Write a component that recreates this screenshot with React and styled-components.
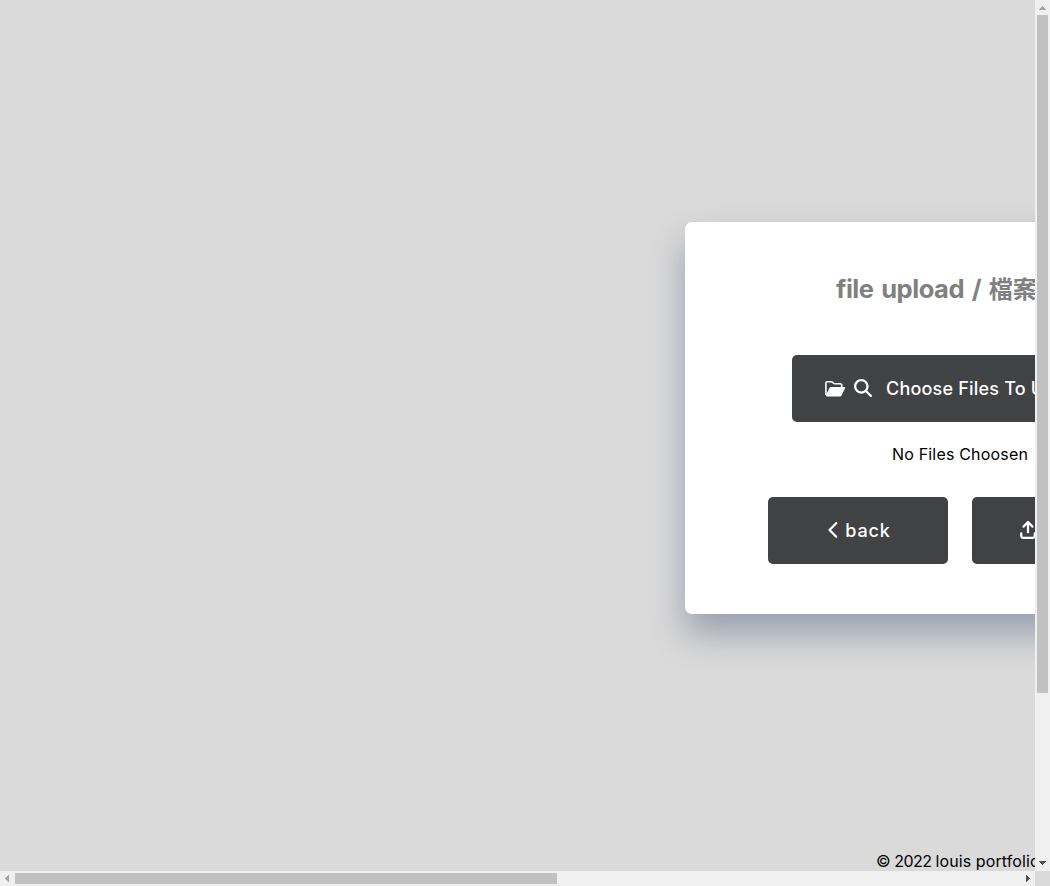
import React from "react";
import styled, { createGlobalStyle } from "styled-components";
import { FaMagnifyingGlass, FaChevronLeft, FaArrowUpFromBracket } from "react-icons/fa6";

const GlobalStyle = createGlobalStyle`
  * { box-sizing: border-box; }
  body {
    margin: 0;
    overflow: hidden;
    background: #dadada;
    font-family: Inter, "Noto Sans CJK TC", sans-serif;
  }
  h1, p { margin: 0; }
  button { font-family: inherit; }
`;

const Frame = styled.div`
  display: grid;
  grid-template-columns: minmax(0, 1fr) 15px;
  grid-template-rows: minmax(0, 1fr) 15px;
  width: 1050px;
  height: 886px;
  background: #dadada;
`;

const Viewport = styled.div`
  overflow: hidden;
`;

const Page = styled.div`
  display: flex;
  flex-direction: column;
  width: 1920px;
`;

const Main = styled.main`
  display: flex;
  align-items: center;
  justify-content: center;
  height: 836px;
`;

const Card = styled.section`
  display: flex;
  flex-direction: column;
  align-items: center;
  width: 550px;
  height: 392px;
  padding-top: 50px;
  border-radius: 7px;
  background: #fff;
  box-shadow: 0 20px 35px rgba(0, 26, 75, 0.3);
`;

const Title = styled.h1`
  width: 248px;
  height: 36px;
  margin-bottom: 47px;
  color: #808080;
  font-size: 24px;
  font-weight: 700;
  line-height: 36px;
  white-space: nowrap;
`;

const Latin = styled.span`
  font-size: 25.5px;
  font-weight: 700;
  line-height: 1;
  letter-spacing: -0.45px;
  word-spacing: 2px;
`;

const Button = styled.button`
  display: flex;
  align-items: center;
  justify-content: ${(p) => (p.$wide ? "flex-start" : "center")};
  width: ${(p) => (p.$wide ? 336 : 180)}px;
  height: 67px;
  padding: ${(p) => (p.$wide ? "0 33px" : "0 0 1px")};
  border: 0;
  border-radius: 5px;
  background: #414243;
  color: #fff;
  font-size: 18px;
  font-weight: 500;
  white-space: nowrap;
`;

const Label = styled.span`
  margin-left: ${(p) => p.$gap}px;
  letter-spacing: ${(p) => p.$spacing || 0}px;
`;

const FolderIcon = styled.svg`
  width: 21px;
  height: 18px;
  margin-right: 8px;
`;

const SearchIcon = styled(FaMagnifyingGlass)`
  margin-bottom: 1px;
`;

const Status = styled.p`
  margin: 20px 0 30px;
  font-size: 16px;
  line-height: 25px;
  letter-spacing: 0.18px;
`;

const Actions = styled.div`
  display: flex;
  gap: 24px;
`;

const Footer = styled.footer`
  padding-top: 13px;
  padding-left: 876px;
  font-size: 16px;
  line-height: 24px;
  letter-spacing: 0.1px;
`;

const Year = styled.span`
  letter-spacing: -0.5px;
`;

const Scrollbar = styled.div`
  display: flex;
  flex-direction: ${(p) => (p.$vertical ? "column" : "row")};
  align-items: center;
  justify-content: space-between;
  background: #f0f0f0;
`;

const Thumb = styled.div`
  width: ${(p) => (p.$vertical ? "11px" : "542px")};
  height: ${(p) => (p.$vertical ? "678px" : "11px")};
  margin: ${(p) => (p.$vertical ? "0 0 auto" : "0 auto 0 0")};
  background: #c1c1c1;
`;

const ArrowBox = styled.svg`
  flex: none;
  width: 15px;
  height: 15px;
`;

const Corner = styled.div`
  background: #dadada;
`;

const arrows = {
  up: "M4 10H11V9H10V8H9V7H8V6H7V7H6V8H5V9H4Z",
  down: "M4 5H11V6H10V7H9V8H8V9H7V8H6V7H5V6H4Z",
  left: "M9 4V11H8V10H7V9H6V8H5V7H6V6H7V5H8V4Z",
  right: "M6 4V11H7V10H8V9H9V8H10V7H9V6H8V5H7V4Z",
};

const Arrow = ({ dir, color }) => (
  <ArrowBox viewBox="0 0 15 15" shapeRendering="crispEdges">
    <path d={arrows[dir]} fill={color} />
  </ArrowBox>
);

export default function App() {
  return (
    <>
      <GlobalStyle />
      <Frame>
        <Viewport>
          <Page>
            <Main>
              <Card>
                <Title><Latin>file upload / </Latin>檔案上傳</Title>
                <Button $wide>
                  <FolderIcon viewBox="0 0 21 18" fill="none">
                    <path d="M.9 15V3Q.9 1.8 2.1 1.8H6.2Q7 1.8 7.6 2.4L8.5 3.3Q9 3.8 9.8 3.8H15Q16.8 3.8 16.8 5.5V7" stroke="currentColor" strokeWidth="1.6" />
                    <path d="M6 7H19.4Q20.7 7 20.1 8.2L16.7 15.2Q16.2 16.4 15 16.4H1.8Q.4 16.4 1 15.1L4.5 8Q4.9 7 6 7Z" fill="currentColor" />
                  </FolderIcon>
                  <SearchIcon size={18} />
                  <Label $gap={14} $spacing={0.2}>Choose Files To Upload</Label>
                </Button>
                <Status>No Files Choosen</Status>
                <Actions>
                  <Button>
                    <FaChevronLeft size={18} />
                    <Label $gap={2} $spacing={0.9}>back</Label>
                  </Button>
                  <Button>
                    <FaArrowUpFromBracket size={18} />
                    <Label $gap={6} $spacing={0.65}>upload</Label>
                  </Button>
                </Actions>
              </Card>
            </Main>
            <Footer><Year>© 2022 </Year>louis portfolio</Footer>
          </Page>
        </Viewport>
        <Scrollbar $vertical>
          <Arrow dir="up" color="#a3a3a3" />
          <Thumb $vertical />
          <Arrow dir="down" color="#505050" />
        </Scrollbar>
        <Scrollbar>
          <Arrow dir="left" color="#a3a3a3" />
          <Thumb />
          <Arrow dir="right" color="#505050" />
        </Scrollbar>
        <Corner />
      </Frame>
    </>
  );
}
